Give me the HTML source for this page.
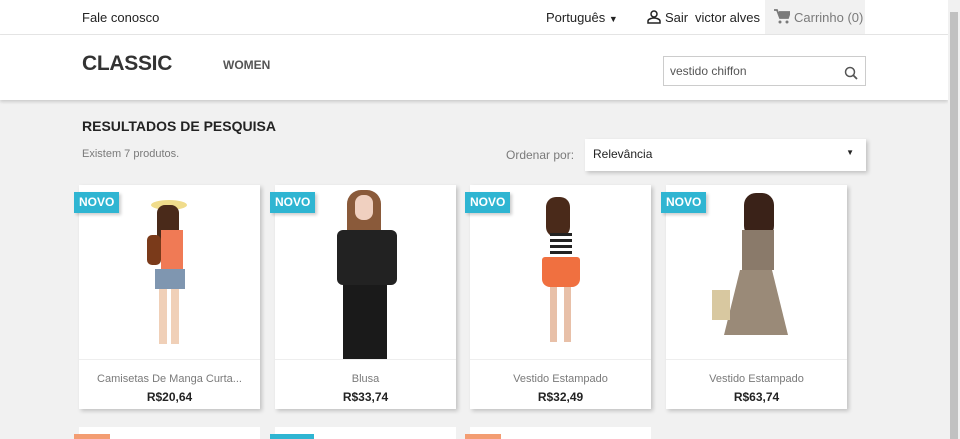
<!DOCTYPE html>
<html><head><meta charset="utf-8"><style>
*{box-sizing:border-box;margin:0;padding:0}
html,body{width:960px;height:439px;overflow:hidden}
body{background:#f1f1f1;font-family:"Liberation Sans",sans-serif;color:#232323;position:relative}
.top{position:absolute;left:0;top:0;width:948px;height:35px;background:#fff;border-bottom:1px solid #e6e6e6;font-size:13px}
.hdr{position:absolute;left:0;top:35px;width:948px;height:65px;background:#fff;box-shadow:0 2px 3px rgba(0,0,0,.15)}
.abs{position:absolute}
.scroll{position:absolute;right:0;top:0;width:12px;height:439px;background:#f1f1f1}
.thumb{position:absolute;right:2px;top:12px;width:8px;height:427px;background:#c1c1c1}
.card{position:absolute;top:185px;width:181px;height:224px;background:#fff;box-shadow:2px 2px 4px rgba(0,0,0,.2)}
.card .img{position:absolute;left:0;top:0;width:181px;height:175px;background:#fff;border-bottom:1px solid #eee;overflow:hidden}
.card .n{position:absolute;top:188px;width:100%;text-align:center;font-size:11px;color:#7a7a7a}
.card .p{position:absolute;top:205px;width:100%;text-align:center;font-size:12px;font-weight:bold}
.badge{position:absolute;top:192px;height:21px;padding:0 5px;background:#2fb5d2;color:#fff;font-weight:bold;font-size:12px;line-height:21px;box-shadow:2px 2px 3px rgba(0,0,0,.2)}
.card2{position:absolute;top:427px;width:181px;height:20px;background:#fff}
</style></head><body>
<div class="top">
<div class="abs" style="left:82px;top:10px">Fale conosco</div>
<div class="abs" style="left:546px;top:10px">Português <span style="font-size:9px">▼</span></div>
<svg class="abs" style="left:647px;top:10px" width="14" height="14" viewBox="0 0 14 14"><circle cx="7" cy="4" r="3" fill="none" stroke="#232323" stroke-width="1.5"/><path d="M1 13v-2c0-2 4-3 6-3s6 1 6 3v2z" fill="none" stroke="#232323" stroke-width="1.5"/></svg>
<div class="abs" style="left:665px;top:10px">Sair</div>
<div class="abs" style="left:695px;top:10px">victor alves</div>
<div class="abs" style="left:765px;top:0;width:100px;height:34px;background:#f1f1f1"></div>
<svg class="abs" style="left:774px;top:9px" width="16" height="15" viewBox="0 0 16 15"><path d="M0 1h3l3 8h8l2-6H5" fill="#7a7a7a" stroke="#7a7a7a" stroke-width="1.8"/><circle cx="6" cy="13" r="1.5" fill="#7a7a7a"/><circle cx="13" cy="13" r="1.5" fill="#7a7a7a"/></svg>
<div class="abs" style="left:794px;top:10px;color:#7a7a7a">Carrinho (0)</div>
</div>
<div class="hdr">
<div class="abs" style="left:82px;top:17px;font-size:21px;font-weight:bold;color:#333;letter-spacing:-0.3px">CLASSIC</div>
<div class="abs" style="left:223px;top:23px;font-size:12px;font-weight:bold;color:#555">WOMEN</div>
<div class="abs" style="left:663px;top:21px;width:203px;height:30px;border:1px solid #ccc;font-size:12px;color:#555;padding:7px 6px">vestido chiffon</div>
<svg class="abs" style="left:844px;top:31px" width="14" height="14" viewBox="0 0 14 14"><circle cx="6" cy="6" r="4.5" fill="none" stroke="#555" stroke-width="1.5"/><path d="M9 9l4 4" stroke="#555" stroke-width="1.8"/></svg>
</div>
<div class="abs" style="left:82px;top:118px;font-size:14px;font-weight:bold">RESULTADOS DE PESQUISA</div>
<div class="abs" style="left:82px;top:148px;font-size:11px;color:#7a7a7a">Existem 7 produtos.</div>
<div class="abs" style="left:506px;top:148px;font-size:12px;color:#7a7a7a">Ordenar por:</div>
<div class="abs" style="left:585px;top:139px;width:281px;height:32px;background:#fff;box-shadow:2px 2px 4px rgba(0,0,0,.2);font-size:12px;padding:8px 8px">Relevância<span style="position:absolute;right:12px;top:9px;font-size:8px">▼</span></div>

<div class="card" style="left:79px"><div class="img">
<div class="abs" style="left:72px;top:15px;width:36px;height:10px;background:#f0dc8c;border-radius:50%"></div>
<div class="abs" style="left:78px;top:20px;width:22px;height:40px;background:#4a2a1a;border-radius:8px"></div>
<div class="abs" style="left:82px;top:45px;width:22px;height:40px;background:#f07a55"></div>
<div class="abs" style="left:68px;top:50px;width:14px;height:30px;background:#7a3a1a;border-radius:5px"></div>
<div class="abs" style="left:76px;top:84px;width:30px;height:20px;background:#7f96b0"></div>
<div class="abs" style="left:80px;top:104px;width:8px;height:55px;background:#f0d0b8"></div>
<div class="abs" style="left:92px;top:104px;width:8px;height:55px;background:#f0d0b8"></div>
</div><div class="n">Camisetas De Manga Curta...</div><div class="p">R$20,64</div></div>
<div class="card" style="left:275px"><div class="img">
<div class="abs" style="left:72px;top:5px;width:34px;height:48px;background:#8a5a3a;border-radius:14px 14px 4px 4px"></div>
<div class="abs" style="left:80px;top:10px;width:18px;height:25px;background:#f0d0c0;border-radius:8px"></div>
<div class="abs" style="left:62px;top:45px;width:60px;height:55px;background:#222;border-radius:6px"></div>
<div class="abs" style="left:68px;top:100px;width:44px;height:75px;background:#1a1a1a"></div>
</div><div class="n">Blusa</div><div class="p">R$33,74</div></div>
<div class="card" style="left:470px"><div class="img">
<div class="abs" style="left:76px;top:12px;width:24px;height:40px;background:#4a2a1a;border-radius:10px"></div>
<div class="abs" style="left:80px;top:48px;width:22px;height:24px;background:repeating-linear-gradient(#222 0 3px,#fff 3px 6px)"></div>
<div class="abs" style="left:72px;top:72px;width:38px;height:30px;background:#f07040;border-radius:3px 3px 8px 8px"></div>
<div class="abs" style="left:80px;top:102px;width:7px;height:55px;background:#e8c0a8"></div>
<div class="abs" style="left:94px;top:102px;width:7px;height:55px;background:#e8c0a8"></div>
</div><div class="n">Vestido Estampado</div><div class="p">R$32,49</div></div>
<div class="card" style="left:666px"><div class="img">
<div class="abs" style="left:78px;top:8px;width:30px;height:45px;background:#3a2218;border-radius:12px"></div>
<div class="abs" style="left:76px;top:45px;width:32px;height:40px;background:#8a7a6a"></div>
<div class="abs" style="left:58px;top:85px;width:64px;height:65px;background:#9a8a78;clip-path:polygon(25% 0,75% 0,100% 100%,0 100%)"></div>
<div class="abs" style="left:46px;top:105px;width:18px;height:30px;background:#d8c8a0"></div>
</div><div class="n">Vestido Estampado</div><div class="p">R$63,74</div></div>

<div class="badge" style="left:74px">NOVO</div>
<div class="badge" style="left:270px">NOVO</div>
<div class="badge" style="left:465px">NOVO</div>
<div class="badge" style="left:661px">NOVO</div>

<div class="card2" style="left:79px"></div>
<div class="card2" style="left:275px"></div>
<div class="card2" style="left:470px"></div>
<div class="abs" style="left:74px;top:434px;width:36px;height:8px;background:#f39d72"></div>
<div class="abs" style="left:270px;top:434px;width:44px;height:8px;background:#2fb5d2"></div>
<div class="abs" style="left:465px;top:434px;width:36px;height:8px;background:#f39d72"></div>
<div class="scroll"><div class="thumb"></div></div>
</body></html>
